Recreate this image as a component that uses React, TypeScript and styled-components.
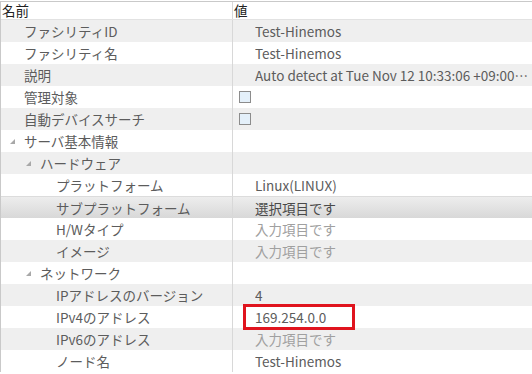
import React from "react";
import styled, { createGlobalStyle } from "styled-components";

const Global = createGlobalStyle`
  html, body { margin: 0; padding: 0; background: #fff; }
  body { font-family: "Noto Sans CJK JP", "Noto Sans", sans-serif; font-size: 13.5px; }
`;

const Table = styled.div`
  width: 532px;
  margin-top: 1px;
  border-top: 1px solid #c9c9c9;
  border-left: 1px solid #c9c9c9;
  box-sizing: border-box;
  display: flex;
  flex-direction: column;
`;

const HeaderRow = styled.div`
  display: grid;
  grid-template-columns: 232px minmax(0, 1fr);
  height: 17px;
  border-bottom: 1px solid #e2e2e2;
  background: #fff;
`;

const HeaderCell = styled.div<{ $first?: boolean }>`
  padding-left: 1px;
  color: #222;
  line-height: 17px;
  border-right: ${(p) => (p.$first ? "1px solid #d8d8d8" : "none")};
`;

const Row = styled.div<{ $stripe: boolean; $selected?: boolean }>`
  display: grid;
  grid-template-columns: 232px minmax(0, 1fr);
  height: 22px;
  box-sizing: border-box;
  background: ${(p) =>
    p.$selected
      ? "linear-gradient(#ededed, #d8d8d8)"
      : p.$stripe
      ? "#efefef"
      : "#fff"};
  border-top: ${(p) => (p.$selected ? "1px solid #dcdcdc" : "none")};
`;

const NameCell = styled.div<{ $level: number }>`
  display: flex;
  align-items: center;
  padding-left: ${(p) => p.$level * 16 - 9}px;
  color: #5c5c5c;
  border-right: 1px solid #d8d8d8;
  white-space: nowrap;
  overflow: hidden;
`;

const Twisty = styled.span`
  width: 12px;
  height: 12px;
  display: inline-flex;
  align-items: center;
  justify-content: flex-start;
  margin-right: 4px;
  padding-left: 2px;
  box-sizing: border-box;
`;

const Spacer = styled.span`
  width: 16px;
  flex: none;
`;

const ValueCell = styled.div<{ $tone: "value" | "hint" | "select" }>`
  position: relative;
  display: flex;
  align-items: center;
  padding-left: 22px;
  color: ${(p) => (p.$tone === "hint" ? "#a0a0a0" : p.$tone === "select" ? "#4a4a4a" : "#5c5c5c")};
  white-space: nowrap;
  min-width: 0;
`;

const ValueText = styled.span`
  overflow: hidden;
  text-overflow: ellipsis;
  min-width: 0;
  padding-right: 3px;
`;

const CheckCell = styled.div`
  display: flex;
  align-items: center;
  padding-left: 6px;
`;

const CheckBox = styled.span`
  width: 10px;
  height: 10px;
  border: 1px solid #8c8c8c;
  background: #e4f0fa;
`;

const Highlight = styled.div`
  position: absolute;
  left: 10px;
  top: -2px;
  width: 112px;
  height: 26px;
  box-sizing: border-box;
  border: 3px solid #e0141e;
  pointer-events: none;
  z-index: 2;
`;

type Item = {
  name: string;
  level: number;
  expandable?: boolean;
  value?: string;
  tone?: "value" | "hint" | "select";
  check?: boolean;
  selected?: boolean;
  mark?: boolean;
};

const items: Item[] = [
  { name: "ファシリティID", level: 1, value: "Test-Hinemos" },
  { name: "ファシリティ名", level: 1, value: "Test-Hinemos" },
  { name: "説明", level: 1, value: "Auto detect at Tue Nov 12 10:33:06 +09:00 2019" },
  { name: "管理対象", level: 1, check: true },
  { name: "自動デバイスサーチ", level: 1, check: true },
  { name: "サーバ基本情報", level: 1, expandable: true },
  { name: "ハードウェア", level: 2, expandable: true },
  { name: "プラットフォーム", level: 3, value: "Linux(LINUX)" },
  { name: "サブプラットフォーム", level: 3, value: "選択項目です", tone: "select", selected: true },
  { name: "H/Wタイプ", level: 3, value: "入力項目です", tone: "hint" },
  { name: "イメージ", level: 3, value: "入力項目です", tone: "hint" },
  { name: "ネットワーク", level: 2, expandable: true },
  { name: "IPアドレスのバージョン", level: 3, value: "4" },
  { name: "IPv4のアドレス", level: 3, value: "169.254.0.0", mark: true },
  { name: "IPv6のアドレス", level: 3, value: "入力項目です", tone: "hint" },
  { name: "ノード名", level: 3, value: "Test-Hinemos" },
];

const Triangle = () => (
  <svg width="5" height="5" viewBox="0 0 5 5">
    <path d="M5 0 L5 5 L0 5 Z" fill="#a8a8a8" />
  </svg>
);

export default function App() {
  return (
    <>
      <Global />
      <Table>
        <HeaderRow>
          <HeaderCell $first>名前</HeaderCell>
          <HeaderCell>値</HeaderCell>
        </HeaderRow>
        {items.map((it, i) => (
          <Row key={i} $stripe={i % 2 === 0} $selected={it.selected}>
            <NameCell $level={it.level}>
              {it.expandable ? (
                <Twisty>
                  <Triangle />
                </Twisty>
              ) : (
                <Spacer />
              )}
              {it.name}
            </NameCell>
            {it.check ? (
              <CheckCell>
                <CheckBox />
              </CheckCell>
            ) : (
              <ValueCell $tone={it.tone ?? "value"}>
                {it.value && <ValueText>{it.value}</ValueText>}
                {it.mark && <Highlight />}
              </ValueCell>
            )}
          </Row>
        ))}
      </Table>
    </>
  );
}
